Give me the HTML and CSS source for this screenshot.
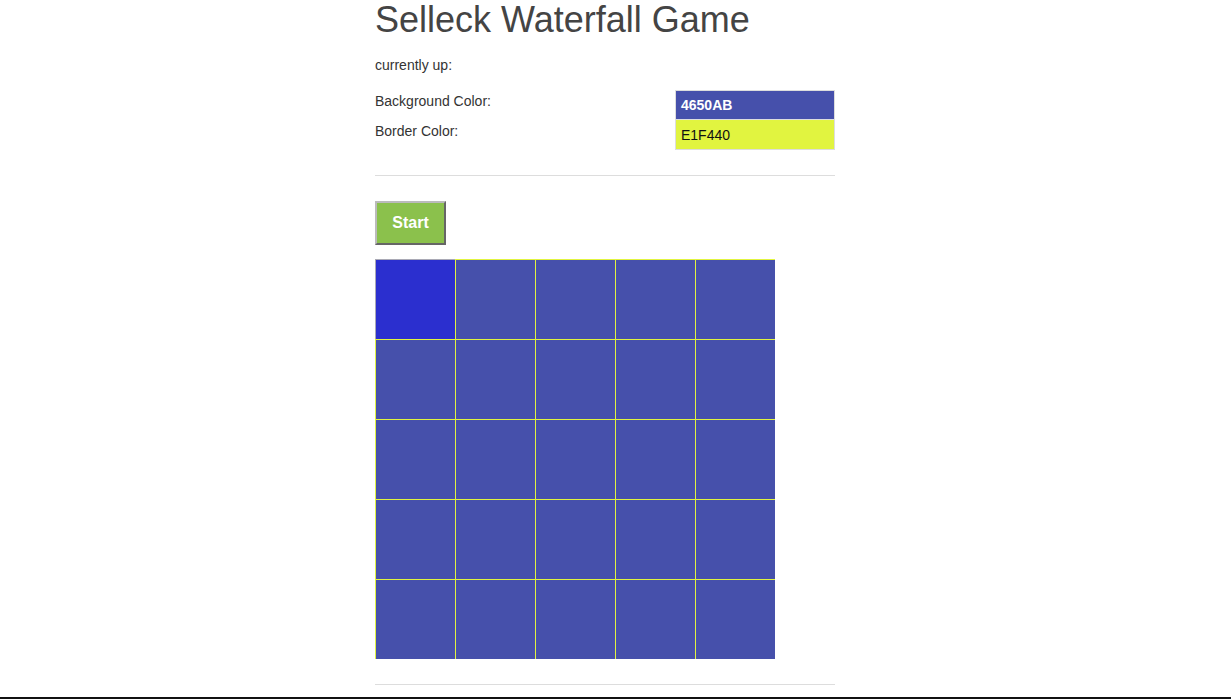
FILE: index.html
```html
<!DOCTYPE html>
<html>
<head>
<meta charset="utf-8">
<link rel="stylesheet" href="styles.css">
</head>
<body>
<div class="container">
  <h1 class="title">Selleck Waterfall Game</h1>
  <p class="up">currently up:</p>
  <div class="colors">
    <div class="labels">
      <div class="label">Background Color:</div>
      <div class="label">Border Color:</div>
    </div>
    <div class="swatches">
      <div class="swatch swatch-bg">4650AB</div>
      <div class="swatch swatch-border">E1F440</div>
    </div>
  </div>
  <hr class="rule">
  <button class="start">Start</button>
  <div class="grid">
    <div class="cell active"></div><div class="cell"></div><div class="cell"></div><div class="cell"></div><div class="cell"></div>
    <div class="cell"></div><div class="cell"></div><div class="cell"></div><div class="cell"></div><div class="cell"></div>
    <div class="cell"></div><div class="cell"></div><div class="cell"></div><div class="cell"></div><div class="cell"></div>
    <div class="cell"></div><div class="cell"></div><div class="cell"></div><div class="cell"></div><div class="cell"></div>
    <div class="cell"></div><div class="cell"></div><div class="cell"></div><div class="cell"></div><div class="cell"></div>
  </div>
  <hr class="rule rule-bottom">
</div>
<div class="footer"></div>
</body>
</html>
```

FILE: styles.css
```css
html, body {
  margin: 0;
  padding: 0;
  background: #fff;
}
body {
  font-family: "Liberation Sans", Arial, sans-serif;
  font-size: 14px;
  color: #333;
}
.container {
  width: 460px;
  margin-left: 375px;
}
.title {
  margin: 0;
  font-size: 36px;
  line-height: 40px;
  font-weight: normal;
  color: #444;
}
.up {
  margin: 15px 0 0 0;
  line-height: 20px;
}
.colors {
  display: flex;
  align-items: flex-start;
  justify-content: space-between;
  margin-top: 15px;
}
.label {
  line-height: 22px;
  height: 30px;
}
.swatches {
  width: 158px;
  border: 1px solid #ddd;
}
.swatch {
  height: 28px;
  line-height: 28px;
  padding-left: 5px;
  font-size: 14px;
}
.swatch-bg {
  background: #4650ab;
  color: #fff;
  font-weight: bold;
  border-bottom: 1px solid #ddd;
}
.swatch-border {
  height: 29px;
  line-height: 30px;
  background: #e1f440;
  color: #111;
}
.rule {
  border: 0;
  border-top: 1px solid #ddd;
  margin: 25px 0 0 0;
  height: 0;
}
.start {
  display: block;
  margin-top: 25px;
  width: 71px;
  height: 44px;
  background: #8bc14c;
  color: #fff;
  font-family: "Liberation Sans", Arial, sans-serif;
  font-size: 16px;
  font-weight: bold;
  border: 2px solid;
  border-color: #bbb #666 #666 #bbb;
  padding: 0;
}
.grid {
  display: grid;
  grid-template-columns: repeat(5, 80px);
  grid-auto-rows: 80px;
  margin-top: 14px;
  width: 400px;
}
.cell {
  background: #4650ab;
  border-top: 1px solid #e1f440;
  border-left: 1px solid #e1f440;
}
.cell.active {
  background: #2b2fcf;
  border-color: #a9a9b5;
}
.rule-bottom {
  margin-top: 25px;
}
.footer {
  margin-top: 12px;
  height: 40px;
  background: #111;
}
```
